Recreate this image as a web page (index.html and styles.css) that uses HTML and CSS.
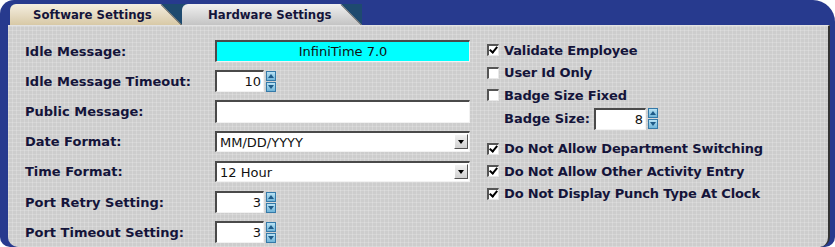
FILE: index.html
```html
<!DOCTYPE html>
<html lang="en">
<head>
    <meta charset="UTF-8">
    <title>Clock Settings</title>
    <link rel="stylesheet" href="styles.css">
</head>
<body>
    <div class="frame">
        <div class="tab-strip">
            <div class="tab tab-active">Software Settings</div>
            <div class="tab">Hardware Settings</div>
        </div>

        <div class="panel">
            <div class="col-left">
                <div class="row">
                    <label>Idle Message:</label>
                    <input type="text" class="text-input idle" value="InfiniTime 7.0">
                </div>
                <div class="row">
                    <label>Idle Message Timeout:</label>
                    <div class="spinner">
                        <input type="text" class="spin-input" value="10">
                        <div class="spin-btns">
                            <span class="spin-btn up"></span>
                            <span class="spin-btn down"></span>
                        </div>
                    </div>
                </div>
                <div class="row">
                    <label>Public Message:</label>
                    <input type="text" class="text-input" value="">
                </div>
                <div class="row">
                    <label>Date Format:</label>
                    <div class="select-wrap">
                        <select class="select">
                            <option>MM/DD/YYYY</option>
                        </select>
                        <span class="select-btn"></span>
                    </div>
                </div>
                <div class="row">
                    <label>Time Format:</label>
                    <div class="select-wrap">
                        <select class="select">
                            <option>12 Hour</option>
                        </select>
                        <span class="select-btn"></span>
                    </div>
                </div>
                <div class="row">
                    <label>Port Retry Setting:</label>
                    <div class="spinner">
                        <input type="text" class="spin-input" value="3">
                        <div class="spin-btns">
                            <span class="spin-btn up"></span>
                            <span class="spin-btn down"></span>
                        </div>
                    </div>
                </div>
                <div class="row">
                    <label>Port Timeout Setting:</label>
                    <div class="spinner">
                        <input type="text" class="spin-input" value="3">
                        <div class="spin-btns">
                            <span class="spin-btn up"></span>
                            <span class="spin-btn down"></span>
                        </div>
                    </div>
                </div>
            </div>

            <div class="col-right">
                <div class="check-row"><span class="check checked"></span>Validate Employee</div>
                <div class="check-row"><span class="check"></span>User Id Only</div>
                <div class="check-row"><span class="check"></span>Badge Size Fixed</div>
                <div class="badge-row">
                    <label>Badge Size:</label>
                    <div class="spinner">
                        <input type="text" class="spin-input badge" value="8">
                        <div class="spin-btns">
                            <span class="spin-btn up"></span>
                            <span class="spin-btn down"></span>
                        </div>
                    </div>
                </div>
                <div class="check-row gap"><span class="check checked"></span>Do Not Allow Department Switching</div>
                <div class="check-row"><span class="check checked"></span>Do Not Allow Other Activity Entry</div>
                <div class="check-row"><span class="check checked"></span>Do Not Display Punch Type At Clock</div>
            </div>
        </div>
    </div>
</body>
</html>
```

FILE: styles.css
```css
:root {
    --frame-blue: #273a8e;
    --strip-teal: #1e4a6f;
    --panel-gray: #cdcdcd;
    --text-dark: #14143a;
}

body {
    margin: 0;
    background: #fff;
    font-family: "DejaVu Sans", Verdana, sans-serif;
}

.frame {
    width: 835px;
    height: 247px;
    box-sizing: border-box;
    background: var(--frame-blue);
    border-radius: 14px 22px 10px 10px;
    padding: 0 5px 2px 8px;
    display: flex;
    flex-direction: column;
}

/* tabs */
.tab-strip {
    height: 21px;
    margin-top: 4px;
    margin-left: 2px;
    width: 352px;
    background: var(--strip-teal);
    border-top-left-radius: 6px;
    display: flex;
}

.tab {
    position: relative;
    width: 180px;
    box-sizing: border-box;
    padding-left: 26px;
    font-family: "DejaVu Sans Condensed", "DejaVu Sans", sans-serif;
    font-size: 13px;
    font-weight: bold;
    line-height: 21px;
    color: var(--text-dark);
    background: linear-gradient(#f0f0f0, #c4c4c4);
    border-top-left-radius: 6px;
    clip-path: polygon(0 0, calc(100% - 21px) 0, 100% 100%, 0 100%);
}

/* dark line along the slanted edge */
.tab::after {
    content: "";
    position: absolute;
    right: 10px;
    top: -4px;
    width: 1px;
    height: 30px;
    background: #555;
    transform: rotate(-45deg);
}

.tab-active {
    width: 172px;
    padding-left: 23px;
    background: linear-gradient(#f4eee0, #d8c9a6);
}

/* panel */
.panel {
    flex: 1;
    display: flex;
    padding: 10px 0 0 17px;
    border-top: 1px solid #e2e2e2;
    border-right: 2px solid #333;
    border-radius: 0 0 10px 10px;
    background-color: var(--panel-gray);
    background-image:
        repeating-linear-gradient(90deg, rgba(255,255,255,0.18) 0 1px, transparent 1px 4px),
        repeating-linear-gradient(0deg, rgba(255,255,255,0.18) 0 1px, transparent 1px 4px);
}

label {
    font-size: 13px;
    font-weight: bold;
    color: var(--text-dark);
}

.col-left {
    width: 462px;
}

.row {
    height: 30.2px;
    display: grid;
    grid-template-columns: 190px 255px;
    align-items: center;
}

.text-input,
.spin-input,
.select {
    box-sizing: border-box;
    font-family: "DejaVu Sans", Verdana, sans-serif;
    font-size: 13px;
    color: #111;
    background: #fff;
    border-style: solid;
    border-width: 2px 1px 1px 2px;
    border-color: #4a4a4a #f2f2f2 #f2f2f2 #4a4a4a;
    margin: 0;
    outline: none;
}

.text-input {
    width: 255px;
    height: 23px;
    padding: 0 4px;
}

.idle {
    height: 22px;
    background: #00ffff;
    text-align: center;
}

.select-wrap {
    position: relative;
    width: 255px;
}

.select {
    appearance: none;
    width: 255px;
    height: 21px;
    padding: 0 3px;
    border-radius: 0;
}

.select-btn {
    position: absolute;
    right: 2px;
    top: 3px;
    width: 14px;
    height: 15px;
    box-sizing: border-box;
    background: linear-gradient(#f2f2f2, #d0d0d0);
    border: 1px solid;
    border-color: #fff #555 #555 #fff;
}

.select-btn::after {
    content: "";
    position: absolute;
    left: 3px;
    top: 5px;
    border-left: 3.5px solid transparent;
    border-right: 3.5px solid transparent;
    border-top: 4px solid #000;
}

/* spinner */
.spinner {
    display: flex;
    align-items: center;
    gap: 2px;
}

.spin-input {
    width: 49px;
    height: 22px;
    padding: 0 2px 0 0;
    text-align: right;
}

.badge {
    width: 52px;
}

.spin-btns {
    display: flex;
    flex-direction: column;
    gap: 1px;
}

.spin-btn {
    position: relative;
    display: block;
    width: 10px;
    height: 10px;
    box-sizing: border-box;
    border: 1px solid #3479a8;
    background: linear-gradient(#b8e2f4, #6fb4d8);
}

.spin-btn::after {
    content: "";
    position: absolute;
    left: 1px;
    border-left: 3px solid transparent;
    border-right: 3px solid transparent;
}

.spin-btn.up::after {
    top: 2px;
    border-bottom: 4px solid #1d5a88;
}

.spin-btn.down::after {
    top: 2px;
    border-top: 4px solid #1d5a88;
}

/* right column */
.col-right {
    padding-top: 3px;
}

.check-row {
    height: 22.5px;
    display: flex;
    align-items: center;
    font-size: 13px;
    font-weight: bold;
    letter-spacing: -0.15px;
    color: var(--text-dark);
}

.check-row.gap {
    margin-top: 7px;
}

.check {
    position: relative;
    width: 12px;
    height: 12px;
    box-sizing: border-box;
    margin-right: 5px;
    background: #fff;
    border-style: solid;
    border-width: 2px 1px 1px 2px;
    border-color: #555 #e8e8e8 #e8e8e8 #555;
}

.check.checked::after {
    content: "";
    position: absolute;
    left: 2px;
    top: -1px;
    width: 3px;
    height: 6px;
    border-right: 2px solid #000;
    border-bottom: 2px solid #000;
    transform: rotate(40deg);
}

.badge-row {
    height: 24px;
    display: grid;
    grid-template-columns: 90px auto;
    align-items: center;
    padding-left: 17px;
}
```
